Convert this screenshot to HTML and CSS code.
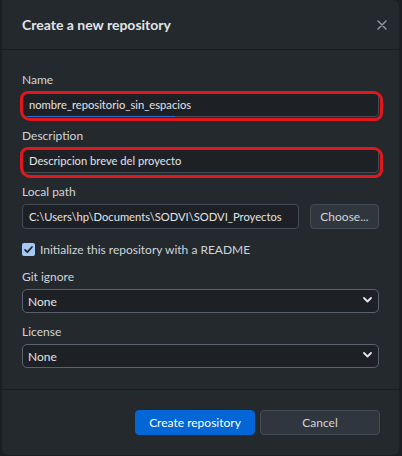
FILE: index.html
```html
<!DOCTYPE html>
<html lang="en">
<head>
<meta charset="utf-8">
<title>Create a new repository</title>
<link rel="stylesheet" href="styles.css">
</head>
<body>
<div class="dialog">
  <header class="dialog-header">
    <h1 class="dialog-title">Create a new repository</h1>
    <button class="close-btn" aria-label="Close">
      <svg width="10" height="10" viewBox="0 0 10 10"><path d="M1 1L9 9M9 1L1 9" stroke="currentColor" stroke-width="1.4" fill="none" stroke-linecap="round"/></svg>
    </button>
  </header>
  <div class="dialog-body">
    <div class="field">
      <label class="field-label">Name</label>
      <div class="control-wrap">
        <div class="text-input">nombre_repositorio_sin_espacios</div>
        <span class="focus-line"></span>
        <span class="mark mark-name"></span>
      </div>
    </div>
    <div class="field">
      <label class="field-label">Description</label>
      <div class="control-wrap">
        <div class="text-input">Descripcion breve del proyecto</div>
        <span class="mark mark-desc"></span>
      </div>
    </div>
    <div class="field">
      <label class="field-label">Local path</label>
      <div class="path-row">
        <div class="text-input path-input">C:\Users\hp\Documents\SODVI\SODVI_Proyectos</div>
        <button class="btn btn-secondary choose-btn">Choose...</button>
      </div>
    </div>
    <div class="check-row">
      <span class="checkbox">
        <svg width="11" height="11" viewBox="0 0 11 11"><path d="M2 5.8L4.3 8.1L9 3" stroke="#1f2328" stroke-width="1.7" fill="none" stroke-linecap="round" stroke-linejoin="round"/></svg>
      </span>
      <span class="check-label">Initialize this repository with a README</span>
    </div>
    <div class="field">
      <label class="field-label">Git ignore</label>
      <div class="select">
        <span>None</span>
        <svg class="chev" width="9" height="6" viewBox="0 0 9 6"><path d="M1 1L4.5 4.5L8 1" stroke="currentColor" stroke-width="1.8" fill="none" stroke-linecap="round" stroke-linejoin="round"/></svg>
      </div>
    </div>
    <div class="field">
      <label class="field-label">License</label>
      <div class="select">
        <span>None</span>
        <svg class="chev" width="9" height="6" viewBox="0 0 9 6"><path d="M1 1L4.5 4.5L8 1" stroke="currentColor" stroke-width="1.8" fill="none" stroke-linecap="round" stroke-linejoin="round"/></svg>
      </div>
    </div>
  </div>
  <footer class="dialog-footer">
    <button class="btn btn-primary">Create repository</button>
    <button class="btn btn-secondary">Cancel</button>
  </footer>
</div>
</body>
</html>
```
FILE: styles.css
```css
* { box-sizing: border-box; }
html, body { margin: 0; padding: 0; }
body {
  background: #1b1e22;
  width: 402px;
  height: 456px;
  overflow: hidden;
  font-family: Lato, "Noto Sans", sans-serif;
  font-size: 12px;
  color: #d1d5da;
}
.dialog {
  margin-left: 2px;
  width: 397px;
  height: 455px;
  background: #24292e;
  border-radius: 0 6px 6px 6px;
  display: flex;
  flex-direction: column;
}
.dialog-header {
  height: 50px;
  border-bottom: 1px solid #1a1d21;
  display: flex;
  align-items: center;
  justify-content: space-between;
  padding: 0 9px 0 20px;
}
.dialog-title {
  margin: 0;
  font-size: 14px;
  font-weight: 700;
  color: #e1e4e8;
}
.close-btn {
  background: none;
  border: 0;
  padding: 0;
  width: 16px;
  height: 16px;
  display: flex;
  align-items: center;
  justify-content: center;
  color: #959da5;
}
.dialog-body {
  flex: 1;
  padding: 22px 20px 0 20px;
  display: flex;
  flex-direction: column;
}
.field { display: flex; flex-direction: column; gap: 4px; margin-bottom: 11px; }
.field-label { line-height: 16px; height: 16px; color: #d1d5da; }
.control-wrap { position: relative; }
.text-input {
  height: 25px;
  line-height: 23px;
  padding: 0 6px;
  background: #1d2024;
  border: 1px solid #444d56;
  border-radius: 4px;
  color: #e1e4e8;
  font-size: 11.2px;
  white-space: nowrap;
  overflow: hidden;
}
.focus-line {
  position: absolute;
  left: 6px;
  width: 147px;
  bottom: 0;
  height: 1px;
  background: #2f6fd0;
}
.mark {
  position: absolute;
  border: 3px solid #e0181e;
  border-radius: 8px 9px 8px 10px;
  pointer-events: none;
}
.mark-name { left: -2px; right: -4px; top: -1px; bottom: -4px; }
.mark-desc { left: -2px; right: -4px; top: -1px; bottom: -5px; }
.path-row { display: flex; gap: 11px; }
.path-input { flex: 1; }
.choose-btn { width: 69px; flex: none; }
.btn {
  height: 25px;
  border-radius: 4px;
  font-family: inherit;
  font-size: 12px;
  padding: 0;
  cursor: pointer;
}
.btn-secondary {
  background: #2f363d;
  border: 1px solid #444d56;
  color: #d1d5da;
}
.btn-primary {
  background: #0366d6;
  border: 1px solid #0366d6;
  color: #ffffff;
}
.check-row {
  display: flex;
  align-items: center;
  gap: 5px;
  height: 16px;
  margin: 1px 0 12px;
}
.checkbox {
  width: 13px;
  height: 13px;
  border-radius: 2px;
  background: #a5c8f5;
  display: flex;
  align-items: center;
  justify-content: center;
}
.check-label { color: #d1d5da; font-size: 12px; }
.select {
  height: 24px;
  background: #1d2024;
  border: 1px solid #5a636d;
  border-radius: 5px;
  display: flex;
  align-items: center;
  justify-content: space-between;
  padding: 0 6px 0 5px;
  color: #e1e4e8;
}
.chev { color: #e1e4e8; margin-top: -2px; }
.dialog-footer {
  border-top: 1px solid #1a1d21;
  display: flex;
  justify-content: flex-end;
  gap: 5px;
  padding: 20px 19px 20px 0;
}
.dialog-footer .btn { width: 120px; }
```
